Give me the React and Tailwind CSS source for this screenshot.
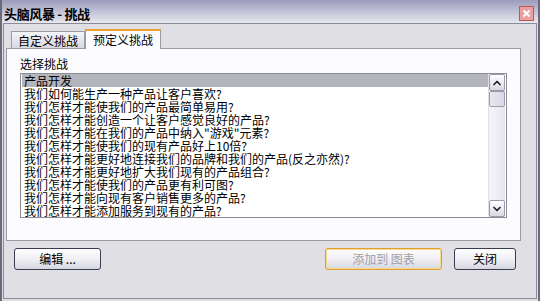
import { ChevronUp, ChevronDown } from 'lucide-react';

const preguntas = [
  '产品开发',
  '我们如何能生产一种产品让客户喜欢?',
  '我们怎样才能使我们的产品最简单易用?',
  '我们怎样才能创造一个让客户感觉良好的产品?',
  '我们怎样才能在我们的产品中纳入"游戏"元素?',
  '我们怎样才能使我们的现有产品好上10倍?',
  '我们怎样才能更好地连接我们的品牌和我们的产品(反之亦然)?',
  '我们怎样才能更好地扩大我们现有的产品组合?',
  '我们怎样才能使我们的产品更有利可图?',
  '我们怎样才能向现有客户销售更多的产品?',
  '我们怎样才能添加服务到现有的产品?',
];

const font = { fontFamily: '"Noto Sans CJK SC", "Liberation Sans", sans-serif' };

function Boton({ children, className = '', disabled }) {
  return (
    <button
      className={`h-[22px] rounded-[3px] border text-[12px] leading-none flex items-center justify-center bg-gradient-to-b from-white via-[#f0f0f4] to-[#d6d6e0] ${
        disabled ? 'border-[#e0a030] text-[#a0a0a8] shadow-[inset_0_0_0_1px_#f8d890]' : 'border-[#3c3c50] text-black'
      } ${className}`}
    >
      {children}
    </button>
  );
}

export default function App() {
  return (
    <div
      className="w-[540px] h-[301px] bg-[#e0dfe3] border-x-2 border-[#6a6a7a] flex flex-col overflow-hidden"
      style={font}
    >
      {/* Barra de titulo */}
      <div className="h-[23px] shrink-0 flex items-center justify-between pl-[2px] pr-[4px] pt-[3px] bg-gradient-to-b from-[#9c9cbc] to-[#e8e8f0]">
        <span className="text-[13px] font-bold text-black leading-none tracking-tight">头脑风暴 - 挑战</span>
        <div className="w-[15px] h-[15px] mt-[1px] border border-[#b85858] bg-[#eaa0a0] flex items-center justify-center">
          <svg width="9" height="9" viewBox="0 0 9 9">
            <path d="M1.5 1.5l6 6M7.5 1.5l-6 6" stroke="white" strokeWidth="2" />
          </svg>
        </div>
      </div>

      <div className="flex-1 mx-[1px] mb-[2px] border border-[#8c8c98] flex flex-col">
        {/* Pestañas */}
        <div className="flex items-end pl-[7px] pt-[3px] h-[24px]">
          <div className="h-[17px] px-[6px] border border-b-0 border-[#9a9aa4] bg-gradient-to-b from-[#f4f4f8] to-[#d8d8e0] text-[12px] leading-[17px] text-black">
            自定义挑战
          </div>
          <div className="h-[20px] w-[76px] border border-b-0 border-[#9a9aa4] border-t-2 border-t-[#f0a030] bg-[#fcfcfe] text-[12px] leading-[18px] text-black text-center relative z-10 -mb-px">
            预定义挑战
          </div>
        </div>

        <div className="ml-[2px] w-[515px] h-[193px] border border-[#9a9aa4] bg-[#fcfcfe] px-[13px] pt-[8px]">
          <div className="text-[12px] leading-[13px] text-black mb-[3px]">选择挑战</div>
          <div className="h-[145px] border border-[#8c8c98] bg-white flex px-[1px]">
            <div className="flex-1 overflow-hidden">
              {preguntas.map((p, i) => (
                <div
                  key={i}
                  className={`h-[13px] text-[12px] leading-[13px] pl-[2px] whitespace-nowrap text-black ${
                    i === 0 ? 'bg-[#b4b4bc]' : ''
                  }`}
                >
                  {p}
                </div>
              ))}
            </div>
            <div className="w-[17px] flex flex-col bg-gradient-to-r from-[#f4f4f8] to-[#e6e6f0] border-l border-[#e0e0e8]">
              <div className="h-[17px] border border-[#9a9aa8] rounded-[2px] bg-gradient-to-b from-white to-[#d8d8e2] flex items-center justify-center">
                <ChevronUp size={12} strokeWidth={3.5} color="#202030" />
              </div>
              <div className="h-[16px] border border-[#9a9aa8] rounded-[2px] bg-gradient-to-r from-[#e8e8f0] to-[#d8d8e4]" />
              <div className="flex-1" />
              <div className="h-[17px] border border-[#9a9aa8] rounded-[2px] bg-gradient-to-b from-white to-[#d8d8e2] flex items-center justify-center">
                <ChevronDown size={12} strokeWidth={3.5} color="#202030" />
              </div>
            </div>
          </div>
        </div>

        {/* Botones */}
        <div className="flex items-center mt-[7px] pl-[10px] pr-[20px]">
          <Boton className="w-[87px]">编辑 ...</Boton>
          <div className="flex-1" />
          <Boton className="w-[117px]" disabled>添加到 图表</Boton>
          <Boton className="w-[62px] ml-[12px]">关闭</Boton>
        </div>
      </div>
    </div>
  );
}
